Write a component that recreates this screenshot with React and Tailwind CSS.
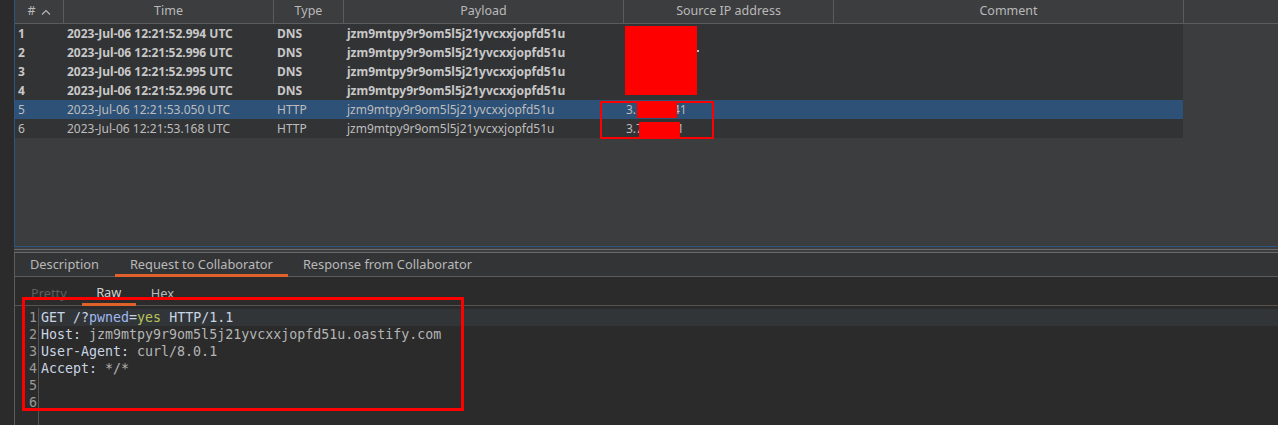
import React from "react";

const cols = [
  { w: 49, label: "#" },
  { w: 210, label: "Time" },
  { w: 70, label: "Type" },
  { w: 280, label: "Payload" },
  { w: 210, label: "Source IP address" },
  { w: 350, label: "Comment" },
];

const rows = [
  ["1", "2023-Jul-06 12:21:52.994 UTC", "DNS", true],
  ["2", "2023-Jul-06 12:21:52.996 UTC", "DNS", true],
  ["3", "2023-Jul-06 12:21:52.995 UTC", "DNS", true],
  ["4", "2023-Jul-06 12:21:52.996 UTC", "DNS", true],
  ["5", "2023-Jul-06 12:21:53.050 UTC", "HTTP", false],
  ["6", "2023-Jul-06 12:21:53.168 UTC", "HTTP", false],
];

const payload = "jzm9mtpy9r9om5l5j21yvcxxjopfd51u";

export default function App() {
  return (
    <div className="w-[1278px] h-[425px] overflow-hidden bg-[#2b2b2b] flex text-[#bbbbbb]" style={{ fontFamily: '"Noto Sans", "Open Sans", sans-serif' }}>
      <div className="w-[14px] shrink-0 bg-[#2b2b2b]" />
      <div className="flex-1 flex flex-col">
        {/* top table panel */}
        <div className="h-[247px] bg-[#3c3d3f] border-l border-b border-[#2e5482] flex flex-col relative">
          <div className="h-[24px] flex border-b border-[#5b5c5e] bg-[#3c3d3f]">
            {cols.map((c, i) => (
              <div key={i} style={{ width: c.w }} className="shrink-0 border-r border-[#5b5c5e] flex items-center justify-center text-[12.5px] text-[#b9b9b9]">
                {i === 0 ? (
                  <span className="flex items-center gap-[5px]">#<svg width="10" height="6" viewBox="0 0 10 6"><path d="M1 5.5 L5 1.5 L9 5.5" fill="none" stroke="#b9b9b9" strokeWidth="1.1" /></svg></span>
                ) : c.label}
              </div>
            ))}
          </div>
          <div className="w-[1168px] flex flex-col">
            {rows.map((r, i) => {
              const sel = i === 4;
              return (
                <div key={i} className={`h-[19px] flex items-center text-[12px] ${sel ? "bg-[#2d5177]" : "bg-[#323335]"} ${r[3] ? "font-bold text-[#c8c8c8]" : "text-[#bdbdbd]"}`}>
                  <div className="w-[49px] pl-[3px] shrink-0">{r[0]}</div>
                  <div className="w-[210px] pl-[3px] shrink-0">{r[1]}</div>
                  <div className="w-[70px] pl-[3px] shrink-0">{r[2]}</div>
                  <div className="w-[280px] pl-[3px] shrink-0">{payload}</div>
                  <div className="w-[210px] pl-[2px] shrink-0 flex">
                    {r[3] ? null : i === 4 ? (
                      <><span>3.1</span><span className="inline-block w-[30px]" /><span>41</span></>
                    ) : (
                      <><span>3.7</span><span className="inline-block w-[34px]" /><span>1</span></>
                    )}
                  </div>
                </div>
              );
            })}
          </div>
          {/* redactions */}
          <div className="absolute left-[610px] top-[26px] w-[72px] h-[69px] bg-[#ff0000]" />
          <div className="absolute left-[682px] top-[50px] w-[2px] h-[2px] bg-[#bbbbbb]" />
          <div className="absolute left-[622px] top-[103px] w-[40px] h-[15px] bg-[#ff0000]" />
          <div className="absolute left-[624px] top-[122px] w-[41px] h-[15px] bg-[#ff0000]" />
          <div className="absolute left-[585px] top-[101px] w-[114px] h-[38px] border-2 border-[#ff0000]" />
        </div>
        <div className="h-[6px] bg-[#3c3d3f] border-b border-[#6a6a6a] relative">
          <div className="absolute left-0 right-0 top-[2px] h-px bg-[#6a6a6a]" />
        </div>
        {/* tabs */}
        <div className="h-[24px] bg-[#333436] border-l border-b border-[#5b5c5e] flex items-stretch text-[12.8px] text-[#b9b9b9]">
          <div className="pl-[15px] pr-[16px] flex items-center">Description</div>
          <div className="px-[15px] flex items-center border-b-[3px] border-[#e0612a] pt-[3px] -mb-px">Request to Collaborator</div>
          <div className="px-[15px] flex items-center">Response from Collaborator</div>
        </div>
        {/* editor */}
        <div className="flex-1 bg-[#2b2b2b] border-l border-[#5b5c5e] flex flex-col relative">
          <div className="h-[29px] flex items-stretch border-b border-[#57524d] text-[12.8px] pl-[1px]">
            <div className="pl-[15px] pr-[15px] flex items-end pb-[2px] text-[#5e5e5e]">Pretty</div>
            <div className="w-[54px] flex items-end justify-center pb-[1px] text-[#d0d0d0] border-b-[3px] border-[#e0612a] -mb-px">Raw</div>
            <div className="px-[15px] flex items-end pb-[2px] text-[#bbbbbb]">Hex</div>
          </div>
          <div className="flex flex-1 pt-[2px]" style={{ fontFamily: '"DejaVu Sans Mono", monospace' }}>
            <div className="w-[24px] shrink-0 border-r border-[#555555] flex flex-col items-end pr-[1px] text-[13.3px] leading-[17px] text-[#9a9a9a] pt-[1px]">
              {[1, 2, 3, 4, 5, 6].map((n) => (
                <div key={n}>{n}</div>
              ))}
            </div>
            <div className="flex-1 flex flex-col text-[13.3px] leading-[17px] pt-[1px] text-[#b5b5b5]">
              <div className="bg-[#323538] pl-[2px]"><span className="text-[#c9d4e3]">GET /?</span><span className="text-[#9fb8f0]">pwned</span><span className="text-[#c9d4e3]">=</span><span className="text-[#b6c45a]">yes</span><span className="text-[#c9d4e3]"> HTTP/1.1</span></div>
              <div className="pl-[2px]"><span className="text-[#c9d4e3]">Host: </span>jzm9mtpy9r9om5l5j21yvcxxjopfd51u.oastify.com</div>
              <div className="pl-[2px]"><span className="text-[#c9d4e3]">User-Agent: </span>curl/8.0.1</div>
              <div className="pl-[2px]"><span className="text-[#c9d4e3]">Accept: </span>*/*</div>
              <div className="h-[17px]" />
              <div className="h-[17px]" />
            </div>
          </div>
          <div className="absolute left-[7px] top-[20px] w-[442px] h-[114px] border-[3px] border-[#ff0000]" />
        </div>
      </div>
    </div>
  );
}
